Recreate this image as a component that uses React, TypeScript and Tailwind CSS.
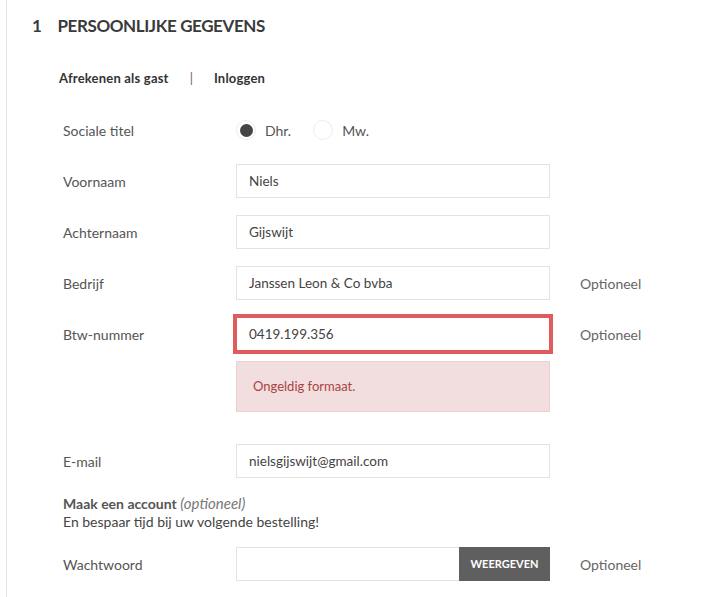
import React from 'react';

const font = { fontFamily: 'Lato, "Open Sans", sans-serif' };

function Row({
  label,
  children,
  optional,
  className = '',
}: {
  label: string;
  children: React.ReactNode;
  optional?: boolean;
  className?: string;
}) {
  return (
    <div className={`flex h-[34px] items-center ${className}`}>
      <div className="w-[173px] text-[14px] text-[#555]">{label}</div>
      <div className="w-[314px]">{children}</div>
      {optional && <div className="ml-[30px] text-[14px] text-[#666]">Optioneel</div>}
    </div>
  );
}

function TextInput({ value, invalid }: { value: string; invalid?: boolean }) {
  return (
    <div
      className={`flex h-[34px] w-full items-center border bg-white px-[12px] text-[13.5px] text-[#444] ${
        invalid ? 'border-[#e05b5b] ring-[3px] ring-[#e05b5b]' : 'border-[#e3e3e3]'
      }`}
    >
      {value}
    </div>
  );
}

function Radio({ checked, label }: { checked?: boolean; label: string }) {
  return (
    <div className="flex items-center gap-[9px]">
      <span className="flex h-[20px] w-[20px] items-center justify-center rounded-full border border-[#ececec] bg-white">
        {checked && <span className="h-[13px] w-[13px] rounded-full bg-[#444]" />}
      </span>
      <span className="text-[14px] text-[#555]">{label}</span>
    </div>
  );
}

export default function App() {
  return (
    <div style={font} className="min-h-[597px] w-[717px] bg-white">
      <div className="ml-[6px] min-h-[597px] border-l border-[#e6e6e6] pl-[25px]">
        <h2 className="flex h-[52px] items-center gap-[16px] text-[17px] font-bold tracking-[-0.4px] text-[#3a3a3a]">
          <span>1</span>
          <span>PERSOONLIJKE GEGEVENS</span>
        </h2>

        <div className="mt-[18px] flex h-[18px] items-center pl-[27px] text-[13px] font-bold text-[#333]">
          <span className="tracking-[0.2px]">Afrekenen als gast</span>
          <span className="mx-[21px] font-normal text-[#666]">|</span>
          <span className="tracking-[0.2px]">Inloggen</span>
        </div>

        <div className="mt-[25px] pl-[31px]">
          <Row label="Sociale titel">
            <div className="flex items-center gap-[22px]">
              <Radio checked label="Dhr." />
              <Radio label="Mw." />
            </div>
          </Row>
          <Row label="Voornaam" className="mt-[17px]">
            <TextInput value="Niels" />
          </Row>
          <Row label="Achternaam" className="mt-[17px]">
            <TextInput value="Gijswijt" />
          </Row>
          <Row label="Bedrijf" optional className="mt-[17px]">
            <TextInput value="Janssen Leon & Co bvba" />
          </Row>
          <Row label="Btw-nummer" optional className="mt-[17px]">
            <TextInput value="0419.199.356" invalid />
          </Row>
          <div className="ml-[173px] mt-[10px] flex h-[51px] w-[314px] items-center border border-[#ebcfd3] bg-[#f2dede] px-[16px] text-[13px] text-[#a94442]">
            Ongeldig formaat.
          </div>
          <Row label="E-mail" className="mt-[32px]">
            <TextInput value="nielsgijswijt@gmail.com" />
          </Row>

          <div className="mt-[16px] text-[14px] leading-[18px] text-[#444]">
            <div>
              <span className="font-bold text-[#555]">Maak een account</span>{' '}
              <span className="text-[15px] italic text-[#777]">(optioneel)</span>
            </div>
            <div>En bespaar tijd bij uw volgende bestelling!</div>
          </div>

          <Row label="Wachtwoord" optional className="mt-[16px]">
            <div className="flex h-[34px] w-full">
              <div className="flex-1 border border-r-0 border-[#e3e3e3] bg-white" />
              <button className="w-[91px] bg-[#5f5f5f] text-[11px] font-bold uppercase text-white">
                Weergeven
              </button>
            </div>
          </Row>
        </div>
      </div>
    </div>
  );
}
